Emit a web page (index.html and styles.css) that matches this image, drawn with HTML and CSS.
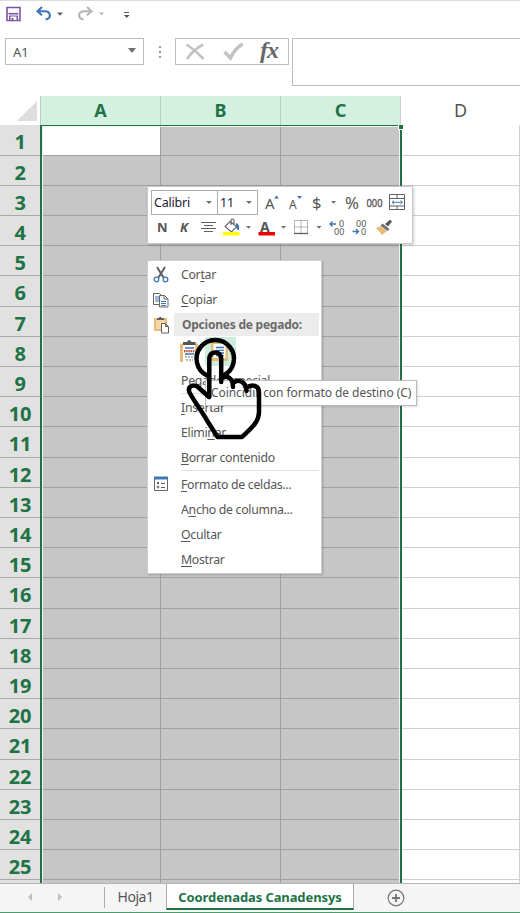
FILE: index.html
```
<!DOCTYPE html>
<html lang="es">
<head>
<meta charset="utf-8">
<title>Coordenadas Canadensys</title>
<link rel="stylesheet" href="styles.css">
</head>
<body>
<div class="app">
  <header class="quick">
    <svg width="140" height="30" viewBox="0 0 140 30" fill="none">
      <path d="M7 7.5h13v13H7z" stroke="#7b55a5" stroke-width="1.6"/>
      <path d="M8.5 13.7h10" stroke="#7b55a5" stroke-width="1.6"/><path d="M9 15.5h9V21H9z" fill="#7b55a5"/><path d="M10.500 16.500h6v3.500h-6z" fill="#fff"/><path d="M11.500 18h2v3h-2z" fill="#7b55a5"/>
      <path d="M42 7l-4.5 4.3 4.5 4M38 11.3h6.5c7 0 7 8 1 8" stroke="#3f76b5" stroke-width="2.1"/>
      <path d="M57 12.5h6l-3 3.2z" fill="#606060"/>
      <path d="M87 7l4.500 4.300-4.500 4M91 11.300h-6.500c-7 0-7 8-1 8" stroke="#b5b5b5" stroke-width="2.100"/>
      <path d="M99 12.500h5l-2.500 2.700z" fill="#b5b5b5"/>
      <path d="M124 12.500h5" stroke="#555"/><path d="M124 15h5.500l-2.700 3z" fill="#555"/>
    </svg>
  </header>
  <div class="formula">
    <div class="namebox"><span>A1</span><svg width="8" height="5" viewBox="0 0 8 5"><path d="M0 0h8L4 5z" fill="#707070"/></svg></div>
    <div class="dots"><i></i><i></i><i></i></div>
    <div class="fx">
      <svg width="60" height="25" viewBox="0 0 60 25" fill="none" stroke="#c2c2c2" stroke-width="2.600"><path d="M10.500 5.500q8 5 17 14.500M27 5.500Q17 11 11 20"/><path d="M48.500 13l6 6q4-9 12-14" stroke-width="3.400"/></svg><span>fx</span>
    </div>
    <div class="entry"></div>
  </div>
  <div class="cols"><div class="corner"><svg width="20" height="20" viewBox="0 0 20 20"><path d="M20 0v20H0z" fill="#dedede"/></svg></div><b>A</b><b>B</b><b>C</b><span>D</span></div>
  <main class="sheet">
    <div class="rows">
      <b>1</b><b>2</b><b>3</b><b>4</b><b>5</b><b>6</b><b>7</b><b>8</b><b>9</b><b>10</b><b>11</b><b>12</b><b>13</b><b>14</b><b>15</b><b>16</b><b>17</b><b>18</b><b>19</b><b>20</b><b>21</b><b>22</b><b>23</b><b>24</b><b>25</b><b></b>
    </div>
    <div class="cells" id="cells"></div>
    <div class="selection"></div><i class="handle"></i>
  </main>
  <footer class="tabs">
    <div class="nav"><svg width="40" height="10" viewBox="0 0 40 10" fill="#bfbfbf"><path d="M5 1v8L1 5zM31 1v8l4-4z"/></svg></div>
    <div class="tab">Hoja1</div>
    <div class="tab active">Coordenadas Canadensys</div>
    <svg class="add" width="18" height="18" viewBox="0 0 18 18" fill="none" stroke="#757575"><circle cx="9" cy="9" r="7.800" stroke-width="1.200"/><path d="M9 5v8M5 9h8" stroke-width="1.800"/></svg>
  </footer>

  <div class="mini">
    <div class="combo font"><span>Calibri</span><i class="arr"></i></div><div class="combo size"><span>11</span><i class="arr"></i></div>
    <svg class="miniicons" width="266" height="58" viewBox="147 187 266 58" fill="none">
      <g fill="#555" font-family="Noto Sans, sans-serif">
        <text x="265" y="209" font-size="15">A</text><text x="289" y="209" font-size="12">A</text>
        <text x="312" y="208.500" font-size="16.500">$</text><text x="345" y="208.500" font-size="16" textLength="14" lengthAdjust="spacingAndGlyphs">%</text>
        <text x="366.500" y="206.500" font-size="10.500" stroke="#555" stroke-width=".300" textLength="16" lengthAdjust="spacingAndGlyphs">000</text>
        <text x="157" y="232" font-size="13" font-weight="bold">N</text><text x="180" y="232" font-size="13" font-weight="bold" font-style="italic">K</text>
        <text x="260" y="232" font-size="14" font-weight="bold">A</text>
        <text x="339" y="227" font-size="9">0</text><text x="334" y="235" font-size="9">00</text>
        <text x="356" y="227" font-size="9">00</text><text x="361" y="235" font-size="9">0</text>
      </g>
      <path d="M274 198.500h5l-2.500-3zM297 196h5l-2.500 3z" fill="#3f76b5"/>
      <path d="M331 201h5l-2.500 2.800zM246 226h5l-2.500 2.800zM281 226h5l-2.500 2.800zM316.500 226h5l-2.500 2.800z" fill="#707070"/>
      <path d="M389.500 194.500h15v15h-15zM389.500 198.500h15M389.500 206h15M397 194.500v4M397 206v4" stroke="#606060"/><path d="M392 202.300h10M394 200.500l-2 1.800 2 1.800M400.500 200.500l2 1.800-2 1.800" stroke="#3f76b5"/>
      <path d="M201 222.500h15M204 225.500h9M201 228.500h15M204 231.500h9" stroke="#606060"/>
      <path d="M230 221.500l6.500 5-5 5.500-6.500-5.500zM231 225v-5q1.500-2 3 0v4" stroke="#606060" stroke-width="1.100"/><path d="M236 223q4 1 3 7-3 0-3-4z" fill="#3f76b5"/>
      <path d="M223 232h16.500v3.500H223z" fill="#ffff00"/><path d="M258.500 232H275v3.500h-16.500z" fill="#f00000"/>
      <path d="M294.500 220.500h13v13h-13zM301 220.500v13M294.500 227h13" stroke="#707070" stroke-dasharray="1 1"/><path d="M294 233.500h14" stroke="#606060" stroke-width="1.300"/>
      <path d="M336 224h-5.500M332.500 221.500l-2.500 2.500 2.500 2.500M352.500 231.500h6M356 229l2.500 2.500-2.500 2.500" stroke="#3f76b5" stroke-width="1.400"/>
      <path d="M376 228l5-2 6 5-5 4z" fill="#e9bd78"/><path d="M380.500 225.500l2-2 7 5.500-2 2z" fill="#707070"/><path d="M385 224l3 2.500 4-5-2-1.800z" fill="#555"/>
    </svg>
  </div>

  <nav class="menu">
    <div class="item"><svg width="18" height="18" viewBox="0 0 18 18" fill="none"><path d="M5 1l6.500 10.500M13 1L6.500 11.500" stroke="#606060" stroke-width="2"/><g stroke="#3f76b5" stroke-width="1.300"><circle cx="4.500" cy="13.500" r="2.300"/><circle cx="13.500" cy="13.500" r="2.300"/></g></svg><span>Cor<u>t</u>ar</span></div>
    <div class="item"><svg width="18" height="18" viewBox="0 0 18 18" fill="none"><path d="M1.500 2.500h6l2 2v9h-8z" fill="#fff" stroke="#666"/><path d="M3 6h4M3 8h4M3 10h4" stroke="#3f76b5"/><path d="M7.500 4.500h5l3.500 3.500v8H7.500zM12 4.500V8h4" fill="#fff" stroke="#666"/><path d="M9 10.500h5M9 12.500h5M9 14.500h5" stroke="#3f76b5"/></svg><span><u>C</u>opiar</span></div>
    <div class="item head"><svg width="18" height="18" viewBox="0 0 18 18" fill="none"><path d="M2 2h13v13H2z" fill="#e9bd78"/><path d="M4 4h9v9H4z" fill="#f3d7a8"/><path d="M5 4V2h2q1-3 2.500 0h2.500v2z" fill="#606060"/><path d="M9.500 7.500h4l3 3v6.500h-7zM13.500 7.500v3h3" fill="#fff" stroke="#606060"/></svg><span>Opciones de pegado:</span></div>
    <div class="paste">
      <svg width="20" height="26" viewBox="0 0 20 26" fill="none"><path d="M0 4.500h18V23H0z" fill="#e9bd78"/><path d="M3 6h12v18H3z" fill="#fff"/><path d="M3 6V3h4q2-4 4.500 0h4v3z" fill="#555"/><path d="M5 9h9M5 15h9" stroke="#3f76b5" stroke-width="1.400"/><path d="M4 12.200h11" stroke="#c65036" stroke-width="2.200" stroke-dasharray="1.500 .700"/><path d="M5 18h9M6 21h7" stroke="#777" stroke-dasharray="2 1"/></svg>
      <div class="hot"><svg width="20" height="26" viewBox="0 0 20 26" fill="none"><path d="M1 4.500h17V23H1z" fill="#e9bd78"/><path d="M3.500 6h12v14h-12z" fill="#fff"/><path d="M6 9.500h8M6 12.300h8M6 15h8M6 17.700h8" stroke="#3f76b5" stroke-width="1.300"/></svg></div>
    </div>
    <div class="item"><span>Pegado especial</span></div>
    <hr>
    <div class="item"><span><u>I</u>nsertar</span></div>
    <div class="item"><span>Elimi<u>n</u>ar</span></div>
    <div class="item"><span><u>B</u>orrar contenido</span></div>
    <hr>
    <div class="item"><svg width="18" height="18" viewBox="0 0 18 18" fill="none"><path d="M2.500 2.500h13v13h-13z" fill="#fff" stroke="#666"/><path d="M2 1.500h14v3H2z" fill="#3f76b5"/><circle cx="6" cy="8" r="1.200" fill="#606060"/><circle cx="6" cy="12" r="1" stroke="#606060"/><path d="M9 8.500h4M9 12.500h4" stroke="#606060"/></svg><span><u>F</u>ormato de celdas...</span></div>
    <div class="item"><span>A<u>n</u>cho de columna...</span></div>
    <div class="item"><span><u>O</u>cultar</span></div>
    <div class="item"><span><u>M</u>ostrar</span></div>
  </nav>
  <div class="tip">Coincidir con formato de destino (C)</div>
  <svg class="hand" width="80" height="110" viewBox="185 335 80 110" fill="none" stroke="#000" stroke-width="4.500" stroke-linejoin="round" stroke-linecap="round">
    <path d="M207 375.500A18.700 18.700 0 1 1 223.500 375.500"/>
    <path d="M209.300 397V358.500Q210 352.500 215.200 352.500T221.200 358.500V382M221.200 379C227 374 233 378 233 387M233 383C239 378 246 382 246.500 391M246.500 388C252 383 259 386 259 392V412C259 423 249 430 242 437H217.500L208 422C201 410 194 401 189.500 392.500C187 386 194 383.500 198.500 387.500L209 397"/>
  </svg>
</div>
<script>
document.getElementById('cells').innerHTML = Array.from({length: 104}, (_, i) =>
  '<div class="' + (i === 0 ? 'current' : i % 4 < 3 ? 'sel' : '') + '"></div>').join('');
</script>
</body>
</html>
```
FILE: styles.css
```
* { box-sizing: border-box; }
body { margin: 0; background: #fff; font-family: "Noto Sans", sans-serif; color: #555; }
.app { position: relative; width: 520px; height: 913px; overflow: hidden; display: flex; flex-direction: column; }
svg { display: block; flex: none; }
.quick { height: 38px; border-top: 1px solid #dcdcdc; }
.quick svg { margin-top: -1px; }
.formula { height: 58px; display: flex; align-items: flex-start; }
.formula > div { flex: none; }
.namebox { width: 139px; height: 27px; margin-left: 5px; border: 1px solid #bdbdbd; display: flex; align-items: center; justify-content: space-between; padding: 0 7px; font-size: 13px; }
.namebox svg { margin-top: -3px; }
.dots { width: 31px; height: 27px; display: flex; flex-direction: column; align-items: center; justify-content: center; gap: 3px; }
.dots i { width: 2px; height: 2px; background: #999; }
.fx { width: 114px; height: 27px; border: 1px solid #bdbdbd; display: flex; }
.fx svg { overflow: visible; }
.fx span { font: italic bold 24px/22px "Liberation Serif", serif; margin-left: 24px; color: #666; letter-spacing: -1px; }
.entry { width: 240px; height: 48px; margin-left: 3px; border: 1px solid #bdbdbd; }
.cols { height: 29px; flex: none; display: grid; grid-template-columns: 40px 120px 120px 120px 120px; font-size: 18px; line-height: 29px; text-align: center; }
.cols b { background: #d3f0e0; color: #217346; border-left: 1px solid #b9cfc2; }
.cols span { border-left: 1px solid #cfcfcf; }
.cols span, .cols b { height: 29px; }
.corner { padding: 5px 0 0 17px; }
.sheet { position: relative; height: 758px; flex: none; overflow: hidden; display: flex; }
.rows { width: 40px; background: #e1e1e1; display: grid; grid-template-rows: 30.600px repeat(25, 30.210px); color: #217346; font-size: 20px; text-align: center; }
.rows b { border-bottom: 1px solid #aaa; line-height: 33px; letter-spacing: -.300px; }
.cells { width: 480px; display: grid; grid-template-columns: 121px 120px 120px 119px; grid-template-rows: 30.600px repeat(25, 30.210px); }
.cells div { border-right: 1px solid #d0d0d0; border-bottom: 1px solid #d0d0d0; }
.cells .sel { background: #c6c6c6; border-color: #a0a0a0; }
.cells .current { background: #fff; border-color: #a0a0a0; }
.selection { position: absolute; left: 40px; top: -1px; width: 362px; height: 780px; border: 2px solid #217346; box-shadow: inset 0 0 0 1px #eef5f0; }
.handle { position: absolute; left: 398px; top: 0; width: 5px; height: 5px; background: #217346; border-left: 1px solid #fff; border-bottom: 1px solid #fff; }
.tabs { height: 30px; flex: none; background: #f5f5f5; border-top: 1px solid #b5b5b5; border-bottom: 1px solid #4e9b70; display: flex; font-size: 14px; line-height: 26px; }
.nav { width: 105px; height: 21px; margin-top: 3px; border-right: 1px solid #aaa; padding: 5px 0 0 27px; }
.tab { width: 61px; text-align: center; height: 26px; letter-spacing: -.500px; }
.tab.active { width: 188px; background: #fff; color: #217346; font-weight: bold; font-size: 13px; border: solid #aaa; border-width: 0 1px 2px; border-bottom-color: #217346; line-height: 26px; letter-spacing: -.100px; white-space: nowrap; }
.add { margin: 5px 0 0 33px; }
.mini { position: absolute; left: 147px; top: 186px; width: 266px; height: 58px; background: #fff; border: 1px solid #c8c8c8; box-shadow: 1px 1px 3px #0003; display: flex; padding: 3px; }
.combo { height: 25px; border: 1px solid #ababab; display: flex; align-items: center; justify-content: space-between; font-size: 12.500px; letter-spacing: -.200px; color: #223; padding: 0 5px 0 2px; }
.combo.font { width: 67px; } .combo.size { width: 41px; margin-left: -1px; }
.arr { border: 3px solid transparent; border-top-color: #707070; border-bottom: 0; }
.miniicons { position: absolute; left: -1px; top: 0; }
.menu { position: absolute; left: 147px; top: 260px; width: 175px; height: 314px; background: #fff; border: 1px solid #cdcdcd; box-shadow: 1px 1px 2px #0003; padding: 1px; font-size: 12.300px; letter-spacing: -.300px; }
.item { height: 25px; display: flex; align-items: center; position: relative; padding-left: 32px; white-space: nowrap; }
.item svg { margin-left: -29px; margin-right: 11px; }
u { text-underline-offset: 2px; text-decoration-thickness: 1px; }
.head { font-weight: bold; background: linear-gradient(#ececec, #ececec) 25px 1px / 145px 23px no-repeat; color: #6a6a6a; font-size: 12px; letter-spacing: -.230px; }
.head span { margin-left: 1px; }
.paste { height: 31px; display: flex; padding: 0 0 0 31px; }
.paste > svg { margin-top: 2px; }
.hot { margin-left: 5px; width: 31px; height: 29px; background: #cdeedd; padding: 1px 0 0 5px; }
.menu hr { height: 1px; border: 0; background: #e1e1e1; margin: 0 1px .800px 32px; }
.tip { position: absolute; left: 205px; top: 380px; width: 212px; height: 26px; border: 1px solid #bcbcbc; background: #fff; box-shadow: 1px 1px 2px #0002; font-size: 12px; letter-spacing: -.060px; line-height: 24px; padding-left: 5px; white-space: nowrap; }
.hand { position: absolute; left: 185px; top: 335px; }
```
